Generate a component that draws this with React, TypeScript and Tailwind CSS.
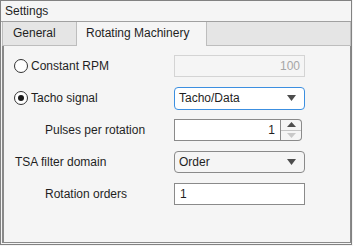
const font = { fontFamily: '"Liberation Sans", Arial, sans-serif' };

const Radio = ({ checked }: { checked?: boolean }) => (
  <span className="w-[14px] h-[14px] rounded-full border border-[#333333] bg-white flex items-center justify-center">
    {checked && <span className="w-[6px] h-[6px] rounded-full bg-[#1a1a1a]" />}
  </span>
);

const Caret = () => (
  <svg width="9" height="6" viewBox="0 0 9 6">
    <path d="M0 0h9L4.5 6z" fill="#4d4d4d" />
  </svg>
);

export default function App() {
  return (
    <div className="w-[353px] h-[246px] bg-[#f5f5f5] text-[12px] text-[#1f1f1f]" style={font}>
      <div className="w-[352px] h-[245px] border border-[#828282] flex flex-col">
        {/* Title */}
        <div className="h-[21px] shrink-0 pl-[4px] leading-[20px] border-b border-[#a0a0a0]">Settings</div>

        {/* Tab group */}
        <div className="flex-1 flex flex-col pl-[1px] pb-[1px]">
          <div className="h-[24px] flex shrink-0">
            <div className="w-[74px] bg-[#e5e5e5] border-b border-l border-[#bdbdbd] pl-[10px] leading-[23px]">General</div>
            <div className="w-[131px] bg-[#f5f5f5] border-l border-r border-[#bdbdbd] pl-[9px] leading-[23px]">Rotating Machinery</div>
            <div className="flex-1 bg-[#e5e5e5] border-b border-r border-[#bdbdbd]" />
          </div>
          <div className="flex-1 border-l-2 border-r border-b border-[#8a8a8a] flex flex-col gap-[10px] pt-[9px]">
            {/* Constant RPM */}
            <div className="h-[22px] flex items-center">
              <div className="w-[170px] flex items-center pl-[10px] gap-[3px]">
                <Radio />
                <span>Constant RPM</span>
              </div>
              <div className="w-[131px] h-[22px] border border-[#d4d4d4] bg-[#f5f5f5] text-right pr-[4px] leading-[20px] text-[#a6a6a6]">100</div>
            </div>

            {/* Tacho signal */}
            <div className="h-[22px] flex items-center">
              <div className="w-[170px] flex items-center pl-[10px] gap-[3px]">
                <Radio checked />
                <span>Tacho signal</span>
              </div>
              <div className="w-[131px] h-[23px] border border-[#3c8fe0] rounded-[4px] bg-white flex items-center justify-between pl-[4px] pr-[8px]">
                <span>Tacho/Data</span>
                <Caret />
              </div>
            </div>

            {/* Pulses per rotation */}
            <div className="h-[22px] flex items-center">
              <div className="w-[170px] pl-[41px]">Pulses per rotation</div>
              <div className="flex h-[22px]">
                <div className="w-[107px] border border-[#8a8a8a] bg-white text-right pr-[5px] leading-[20px]">1</div>
                <div className="w-[21px] border border-l-0 border-[#8a8a8a] rounded-r-[4px] flex flex-col">
                  <div className="flex-1 flex items-center justify-center border-b border-[#c4c4c4]">
                    <svg width="9" height="5" viewBox="0 0 9 5"><path d="M0 5h9L4.5 0z" fill="#4d4d4d" /></svg>
                  </div>
                  <div className="flex-1 flex items-center justify-center">
                    <svg width="9" height="5" viewBox="0 0 9 5"><path d="M0 0h9L4.5 5z" fill="#c8c8c8" /></svg>
                  </div>
                </div>
              </div>
            </div>

            {/* TSA filter domain */}
            <div className="h-[22px] flex items-center">
              <div className="w-[170px] pl-[11px]">TSA filter domain</div>
              <div className="w-[131px] h-[22px] border border-[#8a8a8a] rounded-[4px] flex items-center justify-between pl-[4px] pr-[8px]">
                <span>Order</span>
                <Caret />
              </div>
            </div>

            {/* Rotation orders */}
            <div className="h-[22px] flex items-center">
              <div className="w-[170px] pl-[41px]">Rotation orders</div>
              <div className="w-[131px] h-[22px] border border-[#8a8a8a] bg-white pl-[5px] leading-[20px]">1</div>
            </div>
          </div>
        </div>
      </div>
    </div>
  );
}
